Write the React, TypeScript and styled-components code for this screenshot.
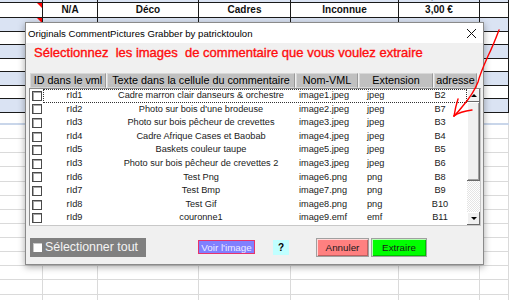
import styled, { createGlobalStyle } from 'styled-components';

const GlobalStyle = createGlobalStyle`
  html, body {
    margin: 0;
    padding: 0;
    background: #ffffff;
    font-family: "Liberation Sans", Arial, sans-serif;
  }
`;

const SHEET_COLS = '43px 55px 101px 92px 108px 81px 1fr';
const BLUE = '#dae3f3';

interface ImageRow {
  id: string;
  text: string;
  file: string;
  ext: string;
  cell: string;
}

const rows: ImageRow[] = [
  { id: 'rId1', text: 'Cadre marron clair danseurs & orchestre', file: 'image1.jpeg', ext: 'jpeg', cell: 'B2' },
  { id: 'rId2', text: "Photo sur bois d'une brodeuse", file: 'image2.jpeg', ext: 'jpeg', cell: 'B7' },
  { id: 'rId3', text: 'Photo sur bois pêcheur de crevettes', file: 'image3.jpeg', ext: 'jpeg', cell: 'B3' },
  { id: 'rId4', text: 'Cadre Afrique Cases et Baobab', file: 'image4.jpeg', ext: 'jpeg', cell: 'B4' },
  { id: 'rId5', text: 'Baskets couleur taupe', file: 'image5.jpeg', ext: 'jpeg', cell: 'B5' },
  { id: 'rId3', text: 'Photo sur bois pêcheur de crevettes 2', file: 'image3.jpeg', ext: 'jpeg', cell: 'B6' },
  { id: 'rId6', text: 'Test Png', file: 'image6.png', ext: 'png', cell: 'B8' },
  { id: 'rId7', text: 'Test Bmp', file: 'image7.png', ext: 'png', cell: 'B9' },
  { id: 'rId8', text: 'Test Gif', file: 'image8.png', ext: 'png', cell: 'B10' },
  { id: 'rId9', text: 'couronne1', file: 'image9.emf', ext: 'emf', cell: 'B11' },
];

const sheetValues = ['', 'N/A', 'Déco', 'Cadres', 'Inconnue', '3,00 €', ''];

const App = () => {
  const tableRows = [0, 1, 2, 3, 4, 5, 6];
  const plainRows = Array.from({ length: 13 }, (_, i) => i);

  return (
    <>
      <GlobalStyle />
      <Page>
        <Sheet>
          <SheetRow $h={14} $bg={BLUE} $line="#1a1a1a" $lift>
            {sheetValues.map((v, i) => (
              <SheetCell key={i} $line="#1a1a1a">{v}</SheetCell>
            ))}
          </SheetRow>
          <SheetRow $h={15} $bg="#ffffff" $line="#1a1a1a">
            {sheetValues.map((v, i) => (
              <SheetCell key={i} $line="#1a1a1a" $comment={i === 0}>{v}</SheetCell>
            ))}
          </SheetRow>
          {tableRows.map((r) => (
            <SheetRow key={r} $h={13.57} $bg={r % 2 === 0 ? BLUE : '#ffffff'} $line="#1a1a1a">
              {sheetValues.map((_, i) => (
                <SheetCell key={i} $line="#1a1a1a" $comment={r === 0 && i === 0} />
              ))}
            </SheetRow>
          ))}
          <SheetRow $h={12} $bg="#ffffff" $line="#c9d6ea" $lineW={2}>
            {sheetValues.map((_, i) => (
              <SheetCell key={i} $line="#dadada" />
            ))}
          </SheetRow>
          {plainRows.map((r) => (
            <SheetRow key={r} $h={14.15} $bg="#ffffff" $line="#dadada">
              {sheetValues.map((_, i) => (
                <SheetCell key={i} $line="#dadada" />
              ))}
            </SheetRow>
          ))}
        </Sheet>

        <Window>
          <TitleBar>
            <Title>Originals CommentPictures Grabber by patricktoulon</Title>
            <svg width="11" height="11" viewBox="0 0 11 11">
              <path d="M1 1 L10 10 M10 1 L1 10" stroke="#111" strokeWidth="1" fill="none" />
            </svg>
          </TitleBar>
          <Body>
            <Heading>Sélectionnez  les images  de commentaire que vous voulez extraire</Heading>
            <HeaderRow>
              <HeaderCell $w={76}>ID dans le vml</HeaderCell>
              <HeaderCell $w={188}>Texte dans la cellule du commentaire</HeaderCell>
              <HeaderCell $w={62}>Nom-VML</HeaderCell>
              <HeaderCell $w={74}>Extension</HeaderCell>
              <HeaderCell $w={43}>adresse</HeaderCell>
            </HeaderRow>
            <ListBox>
              <ListRows>
                {rows.map((row, i) => (
                  <ListRow key={i}>
                    <CheckBox />
                    <RowBody $focused={i === 0}>
                      <Cell $align="center">{row.id}</Cell>
                      <Cell $align="center">{row.text}</Cell>
                      <Cell $align="left">{row.file}</Cell>
                      <Cell $align="left">{row.ext}</Cell>
                      <Cell $align="center">{row.cell}</Cell>
                    </RowBody>
                  </ListRow>
                ))}
              </ListRows>
              <ScrollBar>
                <ScrollButton>
                  <Arrow $dir="up" />
                </ScrollButton>
                <Thumb />
                <Track />
                <ScrollButton>
                  <Arrow $dir="down" />
                </ScrollButton>
              </ScrollBar>
            </ListBox>
            <Footer>
              <SelectAll>
                <WhiteBox />
                Sélectionner tout
              </SelectAll>
              <FlatButton $bg="#8080ff" $color="#ececff" $w={57} $h={14} $ml={52} $border="#e8336d">
                Voir l'image
              </FlatButton>
              <FlatButton $bg="#c0ffff" $color="#000000" $w={16} $h={15} $ml={18} $bold>
                ?
              </FlatButton>
              <RaisedButton $bg="#ff8080" $ml={27} $w={53}>Annuler</RaisedButton>
              <RaisedButton $bg="#00ff00" $ml={2} $w={56}>Extraire</RaisedButton>
            </Footer>
          </Body>
        </Window>

        <Scribble width="69" height="110" viewBox="0 0 69 110">
          <path
            d="M59 10 C56 18 53 26 48 36 C44 45 40 54 38 62 C35 70 28 80 22 87 C19 91 16 94 14 96"
            stroke="#ff0000"
            strokeWidth="1.4"
            fill="none"
            strokeLinecap="round"
          />
          <path d="M14 96 C18 93 24 91 32 90" stroke="#ff0000" strokeWidth="1.4" fill="none" strokeLinecap="round" />
          <path d="M14 96 C15 90 16 85 18 79" stroke="#ff0000" strokeWidth="1.4" fill="none" strokeLinecap="round" />
        </Scribble>
      </Page>
    </>
  );
};
export default App;

const Page = styled.div`
  position: relative;
  width: 509px;
  height: 300px;
  overflow: hidden;
  background: #ffffff;
`;

const Sheet = styled.div`
  display: flex;
  flex-direction: column;
`;

const SheetRow = styled.div<{ $h: number; $bg: string; $line: string; $lineW?: number; $lift?: boolean }>`
  display: grid;
  grid-template-columns: ${SHEET_COLS};
  flex: none;
  box-sizing: border-box;
  height: ${(p) => p.$h}px;
  margin-top: ${(p) => (p.$lift ? -11 : 0)}px;
  background: ${(p) => p.$bg};
  border-bottom: ${(p) => p.$lineW ?? 1}px solid ${(p) => p.$line};
`;

const SheetCell = styled.div<{ $line: string; $comment?: boolean }>`
  position: relative;
  border-right: 1px solid ${(p) => p.$line};
  font-size: 10px;
  font-weight: bold;
  color: #111;
  text-align: center;
  line-height: 14px;
  white-space: nowrap;
  overflow: hidden;

  &::after {
    content: '';
    display: ${(p) => (p.$comment ? 'block' : 'none')};
    position: absolute;
    top: 0;
    right: 0;
    border-top: 5px solid #ff0000;
    border-left: 5px solid transparent;
  }
`;

const Window = styled.div`
  position: absolute;
  left: 25px;
  top: 22px;
  width: 459px;
  height: 243px;
  box-sizing: border-box;
  border: 1px solid #8a8a8a;
  background: #f0f0f0;
  box-shadow: 0 2px 7px rgba(0, 0, 0, 0.35);
  display: flex;
  flex-direction: column;
`;

const TitleBar = styled.div`
  height: 20px;
  background: #ffffff;
  display: flex;
  align-items: center;
  justify-content: space-between;
  padding: 0 6px 0 2px;
`;

const Title = styled.div`
  font-size: 9.6px;
  color: #000;
`;

const Body = styled.div`
  flex: 1;
  display: flex;
  flex-direction: column;
  padding: 0 2px 7px 3px;
`;

const Heading = styled.div`
  height: 30px;
  line-height: 20px;
  padding-left: 5px;
  font-size: 13px;
  color: #ff0d0d;
  -webkit-text-stroke: 0.35px #ff0d0d;
  white-space: pre;
`;

const HeaderRow = styled.div`
  display: flex;
  gap: 1px;
  height: 15px;
  margin-left: 1px;
`;

const HeaderCell = styled.div<{ $w: number }>`
  width: ${(p) => p.$w}px;
  box-sizing: border-box;
  background: #c0c0c0;
  border: 1px solid #d8d8d8;
  border-right-color: #9a9a9a;
  font-size: 10.8px;
  line-height: 13px;
  text-align: center;
  color: #000;
  white-space: nowrap;
  overflow: hidden;
`;

const ListBox = styled.div`
  height: 138px;
  box-sizing: border-box;
  border: 1px solid #8a8a8a;
  border-right-color: #c8c8c8;
  border-bottom-color: #c8c8c8;
  background: #ffffff;
  display: flex;
`;

const ListRows = styled.div`
  flex: 1;
  display: flex;
  flex-direction: column;
`;

const ListRow = styled.div`
  height: 13.6px;
  display: flex;
  align-items: center;
`;

const CheckBox = styled.div`
  width: 10px;
  height: 10px;
  margin: 0 1px 0 2px;
  box-sizing: border-box;
  border: 1px solid #4a4a4a;
  box-shadow: inset 1px 1px 0 #a8a8a8;
  background: #fff;
`;

const RowBody = styled.div<{ $focused?: boolean }>`
  flex: 1;
  height: 100%;
  display: grid;
  grid-template-columns: 63px 190px 68px 56px 40px 1fr;
  outline: ${(p) => (p.$focused ? '1px dotted #333' : 'none')};
  outline-offset: -1px;
`;

const Cell = styled.div<{ $align: 'left' | 'center' }>`
  text-align: ${(p) => p.$align};
  padding-left: ${(p) => (p.$align === 'left' ? 3 : 0)}px;
  font-size: 9.2px;
  line-height: 13.6px;
  color: #1a1a1a;
  white-space: nowrap;
  overflow: hidden;
`;

const ScrollBar = styled.div`
  width: 13px;
  display: flex;
  flex-direction: column;
  background: #f0f0f0;
`;

const ScrollButton = styled.div`
  height: 13px;
  flex: none;
  box-sizing: border-box;
  background: #f0f0f0;
  box-shadow: inset -1px -1px 0 #6a6a6a, inset 1px 1px 0 #ffffff;
  display: flex;
  align-items: center;
  justify-content: center;
`;

const Arrow = styled.div<{ $dir: 'up' | 'down' }>`
  width: 0;
  height: 0;
  border-left: 3px solid transparent;
  border-right: 3px solid transparent;
  border-${(p) => (p.$dir === 'up' ? 'bottom' : 'top')}: 3px solid #000;
`;

const Thumb = styled.div`
  height: 79px;
  flex: none;
  background: #f0f0f0;
  box-shadow: inset -1px -1px 0 #6a6a6a, inset 1px 1px 0 #ffffff, inset -2px -2px 0 #a0a0a0;
`;

const Track = styled.div`
  flex: 1;
  background: repeating-conic-gradient(#ffffff 0 25%, #e4e4e4 0 50%) 0 0 / 2px 2px;
`;

const Footer = styled.div`
  display: flex;
  align-items: center;
  height: 20px;
  margin-top: 11px;
  padding-left: 1px;
`;

const SelectAll = styled.div`
  width: 116px;
  height: 19px;
  box-sizing: border-box;
  padding-left: 3px;
  background: #808080;
  display: flex;
  align-items: center;
  gap: 3px;
  color: #f4f4f4;
  font-size: 12.4px;
  white-space: nowrap;
`;

const WhiteBox = styled.div`
  width: 9px;
  height: 9px;
  background: #ffffff;
  box-shadow: inset 1px 1px 0 #c8c8c8;
`;

const FlatButton = styled.div<{ $bg: string; $color: string; $w: number; $h: number; $ml: number; $border?: string; $bold?: boolean }>`
  width: ${(p) => p.$w}px;
  height: ${(p) => p.$h}px;
  margin-left: ${(p) => p.$ml}px;
  box-sizing: border-box;
  background: ${(p) => p.$bg};
  border: ${(p) => (p.$border ? `1px solid ${p.$border}` : 'none')};
  color: ${(p) => p.$color};
  font-size: ${(p) => (p.$bold ? 10 : 9.8)}px;
  font-weight: ${(p) => (p.$bold ? 'bold' : 'normal')};
  display: flex;
  align-items: center;
  justify-content: center;
  white-space: nowrap;
`;

const RaisedButton = styled.div<{ $bg: string; $ml: number; $w: number }>`
  width: ${(p) => p.$w}px;
  height: 19px;
  margin-left: ${(p) => p.$ml}px;
  box-sizing: border-box;
  background: ${(p) => p.$bg};
  border: 1px solid #a0a0a0;
  box-shadow: inset 1px 1px 0 rgba(255, 255, 255, 0.7), inset -1px -1px 0 rgba(0, 0, 0, 0.25);
  color: #1a1a1a;
  font-size: 9.8px;
  display: flex;
  align-items: center;
  justify-content: center;
`;

const Scribble = styled.svg`
  position: absolute;
  left: 440px;
  top: 20px;
  pointer-events: none;
`;
